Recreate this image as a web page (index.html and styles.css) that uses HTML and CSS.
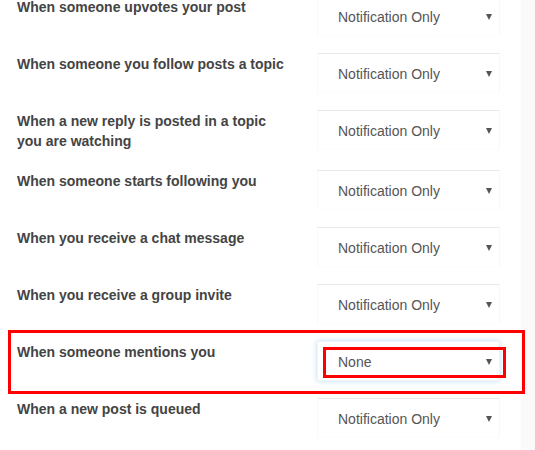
FILE: index.html
```html
<!DOCTYPE html>
<html lang="en">
<head>
  <meta charset="UTF-8" />
  <title>Notification settings</title>
  <link rel="stylesheet" href="styles.css">
</head>
<body>
  <div class="page">
    <div class="settings">
      <div class="row">
        <div class="label">When someone upvotes your post</div>
        <div class="select"><span>Notification Only</span><span class="caret"></span></div>
      </div>
      <div class="row">
        <div class="label">When someone you follow posts a topic</div>
        <div class="select"><span>Notification Only</span><span class="caret"></span></div>
      </div>
      <div class="row">
        <div class="label">When a new reply is posted in a topic you are watching</div>
        <div class="select"><span>Notification Only</span><span class="caret"></span></div>
      </div>
      <div class="row">
        <div class="label">When someone starts following you</div>
        <div class="select"><span>Notification Only</span><span class="caret"></span></div>
      </div>
      <div class="row">
        <div class="label">When you receive a chat message</div>
        <div class="select"><span>Notification Only</span><span class="caret"></span></div>
      </div>
      <div class="row">
        <div class="label">When you receive a group invite</div>
        <div class="select"><span>Notification Only</span><span class="caret"></span></div>
      </div>
      <div class="row highlight">
        <div class="label">When someone mentions you</div>
        <div class="select focused"><span>None</span><span class="caret"></span></div>
      </div>
      <div class="row">
        <div class="label">When a new post is queued</div>
        <div class="select"><span>Notification Only</span><span class="caret"></span></div>
      </div>
    </div>
    <div class="gutter"></div>
  </div>
</body>
</html>
```

FILE: styles.css
```css
body {
  margin: 0;
  font-family: 'Liberation Sans', Arial, sans-serif;
  background: #fff;
  overflow: hidden;
}

.page {
  display: flex;
  height: 450px;
}

.settings {
  width: 521px;
  box-sizing: border-box;
  padding: 0 21px 0 17px;
  margin-top: -4px;
}

.gutter {
  flex: 1;
  background: #fafafa;
}

.row {
  display: flex;
  align-items: flex-start;
  margin-bottom: 17px;
}

.row.highlight {
  position: relative;
}

.row.highlight::after {
  content: "";
  position: absolute;
  left: -9px;
  right: -25px;
  top: -11px;
  bottom: -13px;
  border: 3px solid #f00;
}

.label {
  width: 300px;
  padding: 1px 28px 2px 0;
  box-sizing: border-box;
  font-size: 14px;
  font-weight: bold;
  line-height: 20px;
  color: #444;
}

.select {
  position: relative;
  width: 183px;
  height: 40px;
  box-sizing: border-box;
  display: flex;
  align-items: center;
  justify-content: space-between;
  padding: 2px 7px 0 20px;
  background: #fff;
  border: 1px solid #f8f8f8;
  border-top-color: #e8e8e8;
  border-bottom-color: #fcfcfc;
  font-size: 14px;
  color: #555;
}

.select.focused {
  border-color: #eef3f8;
  box-shadow: 0 0 6px rgba(102, 175, 233, 0.4);
}

.select.focused::after {
  content: "";
  position: absolute;
  left: 5px;
  right: -7px;
  top: 5px;
  bottom: 2px;
  border: 3px solid #f00;
}

.caret {
  width: 0;
  height: 0;
  border-left: 3.5px solid transparent;
  border-right: 3.5px solid transparent;
  border-top: 6px solid #555;
}
```
